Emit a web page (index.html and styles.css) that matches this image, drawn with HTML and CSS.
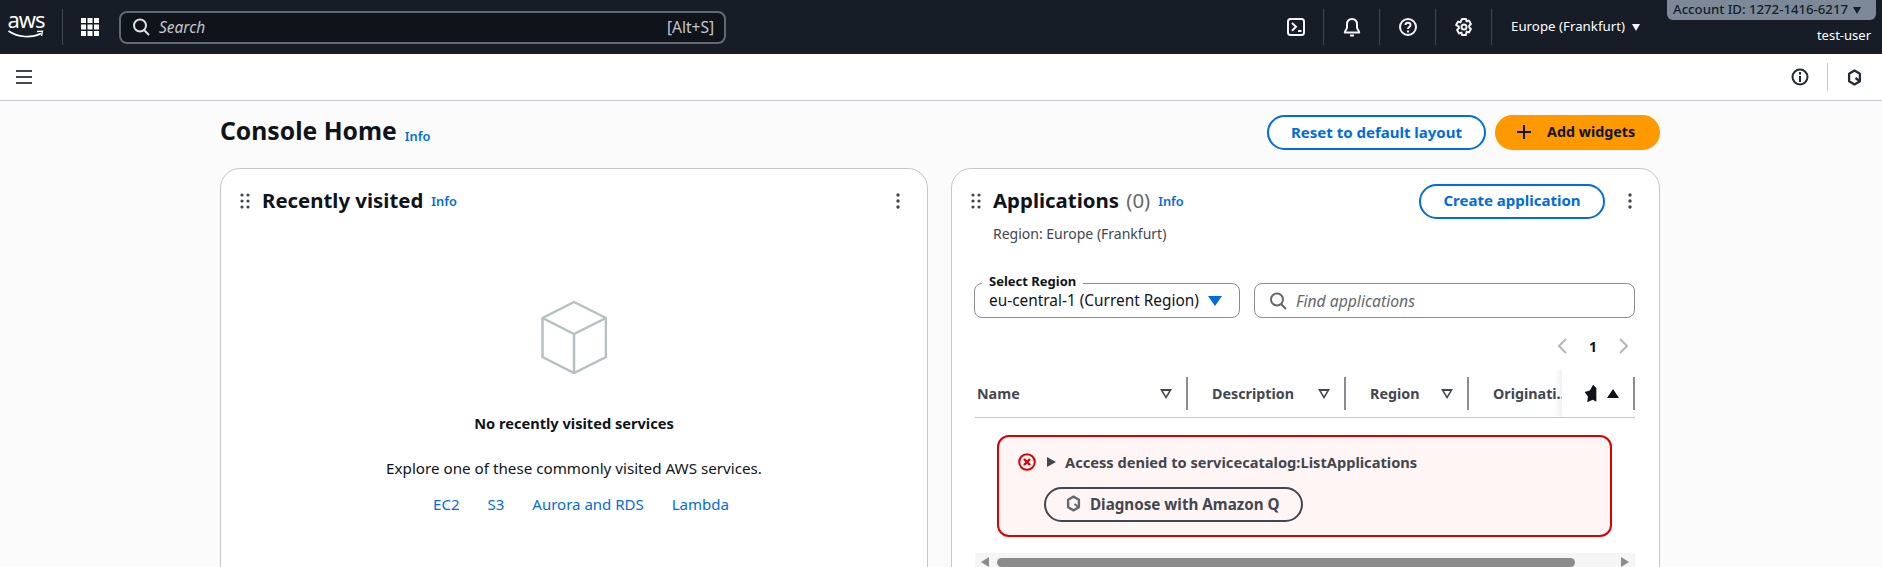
FILE: index.html
```html
<!DOCTYPE html>
<html lang="en">
<head>
    <meta charset="UTF-8">
    <title>Console Home</title>
    <link rel="stylesheet" href="styles.css">
</head>
<body>
    <header class="topbar">
        <div class="logo">
            <span class="logo-text">aws</span>
            <svg class="logo-smile" width="36" height="9" viewBox="0 0 36 9"><path d="M0.500 1C10 7.500 23 8.500 33 3.500" fill="none" stroke="#fff" stroke-width="1.600"/><path d="M29 1.500L34.500 1.200L33.500 6" fill="none" stroke="#fff" stroke-width="1.300"/></svg>
        </div>
        <span class="top-div logo-div"></span>
        <svg class="grid-icon" width="20" height="18" viewBox="0 0 20 18" fill="#fff"><rect x="1" y="0" width="5" height="5"/><rect x="7.500" y="0" width="5" height="5"/><rect x="14" y="0" width="5" height="5"/><rect x="1" y="6.500" width="5" height="5"/><rect x="7.500" y="6.500" width="5" height="5"/><rect x="14" y="6.500" width="5" height="5"/><rect x="1" y="13" width="5" height="5"/><rect x="7.500" y="13" width="5" height="5"/><rect x="14" y="13" width="5" height="5"/></svg>
        <div class="search">
            <svg width="18" height="18" viewBox="0 0 18 18" fill="none" stroke="#dedee3" stroke-width="2"><circle cx="8" cy="7.500" r="6"/><path d="M12 12l5 5"/></svg>
            <span class="search-text">Search</span>
            <span class="search-key">[Alt+S]</span>
        </div>
        <div class="top-icons">
            <span class="top-icon">
                <svg width="20" height="20" viewBox="0 0 20 20" fill="none" stroke="#f3f3f7" stroke-width="2"><rect x="2" y="2" width="16" height="16" rx="2.500"/><path d="M6 6l4 3.800-4 4M12 14h3.500"/></svg>
            </span>
            <span class="top-icon">
                <svg width="20" height="20" viewBox="0 0 20 20" fill="none" stroke="#f3f3f7" stroke-width="2"><path d="M10 2C6.500 2 5 4.500 5 7.500V10.500C5 12 3 13.500 2.800 15.500H17.200C17 13.500 15 12 15 10.500V7.500C15 4.500 13.500 2 10 2z" stroke-linejoin="round"/><path d="M8 18.500h4"/></svg>
            </span>
            <span class="top-icon">
                <svg width="20" height="20" viewBox="0 0 20 20" fill="none" stroke="#f3f3f7" stroke-width="2"><circle cx="10" cy="10" r="8"/><path d="M7.500 8c0-3 5-3 5 0 0 2-2.500 2-2.500 4"/><path d="M10 13.500v2"/></svg>
            </span>
            <span class="top-icon">
                <svg width="20" height="20" viewBox="0 0 20 20" fill="none" stroke="#f3f3f7" stroke-width="2"><circle cx="10" cy="10" r="2.500"/><path d="M8 2h4l.6 2.400 2.300-.8 2 3.400-1.700 1.700v1.600l1.700 1.700-2 3.400-2.300-.8L12 18H8l-.6-2.400-2.300.8-2-3.400 1.700-1.700V9.700L2.100 8l2-3.400 2.300.8z" stroke-linejoin="round"/></svg>
            </span>
        </div>
        <div class="region-menu">Europe (Frankfurt)<span class="caret-white"></span></div>
        <div class="account">
            <div class="account-badge">Account ID: 1272-1416-6217<span class="caret-dark"></span></div>
            <div class="account-user">test-user</div>
        </div>
    </header>

    <nav class="subnav">
        <svg width="18" height="14" viewBox="0 0 18 14" fill="none" stroke="#424650" stroke-width="2"><path d="M1 1h16M1 7h16M1 13h16"/></svg>
        <div class="subnav-right">
            <svg width="18" height="18" viewBox="0 0 18 18" fill="none" stroke="#232b37" stroke-width="2"><circle cx="9" cy="9" r="7.500"/><path d="M9 8v6M9 4v2.500"/></svg>
            <span class="subnav-div"></span>
            <svg class="q-icon" width="15" height="17" viewBox="0 0 14 17" fill="none" stroke="#232b37" stroke-width="2.300"><path d="M7 1.600l5.400 3.200v7.400L7 15.400 1.600 12.200V4.800z" stroke-linejoin="round"/><path d="M8 9l4 3" stroke-width="2.200"/></svg>
        </div>
    </nav>

    <main class="page">
        <div class="page-head">
            <h1>Console Home</h1>
            <a class="info info-h1">Info</a>
            <div class="page-actions">
                <button class="btn btn-reset">Reset to default layout</button>
                <button class="btn btn-add">
                    <svg width="14" height="14" viewBox="0 0 14 14" fill="none" stroke="#0f141a" stroke-width="2"><path d="M7 0v14M0 7h14"/></svg>
                    Add widgets
                </button>
            </div>
        </div>

        <div class="cards">
            <section class="card">
                <div class="card-head">
                    <svg class="drag" width="10" height="16" viewBox="0 0 10 16" fill="#424650"><circle cx="2" cy="2" r="1.600"/><circle cx="8" cy="2" r="1.600"/><circle cx="2" cy="8" r="1.600"/><circle cx="8" cy="8" r="1.600"/><circle cx="2" cy="14" r="1.600"/><circle cx="8" cy="14" r="1.600"/></svg>
                    <h2>Recently visited</h2>
                    <a class="info">Info</a>
                    <svg class="kebab" width="4" height="16" viewBox="0 0 4 16" fill="#424650"><circle cx="2" cy="2" r="1.700"/><circle cx="2" cy="8" r="1.700"/><circle cx="2" cy="14" r="1.700"/></svg>
                </div>
                <div class="empty">
                    <svg class="cube" width="66" height="74" viewBox="0 0 66 74" fill="none" stroke="#b4c0c2" stroke-width="2.500" stroke-linejoin="round"><path d="M33 2L65 18V57L33 73 1.500 57V18z"/><path d="M1.500 18L33 34 65 18M33 34V73"/></svg>
                    <div class="empty-title">No recently visited services</div>
                    <p class="empty-text">Explore one of these commonly visited AWS services.</p>
                    <div class="empty-links"><a>EC2</a><a>S3</a><a>Aurora and RDS</a><a>Lambda</a></div>
                </div>
            </section>

            <section class="card">
                <div class="card-head">
                    <svg class="drag" width="10" height="16" viewBox="0 0 10 16" fill="#424650"><circle cx="2" cy="2" r="1.600"/><circle cx="8" cy="2" r="1.600"/><circle cx="2" cy="8" r="1.600"/><circle cx="8" cy="8" r="1.600"/><circle cx="2" cy="14" r="1.600"/><circle cx="8" cy="14" r="1.600"/></svg>
                    <h2>Applications <span class="count">(0)</span></h2>
                    <a class="info">Info</a>
                    <button class="btn btn-create">Create application</button>
                    <svg class="kebab" width="4" height="16" viewBox="0 0 4 16" fill="#424650"><circle cx="2" cy="2" r="1.700"/><circle cx="2" cy="8" r="1.700"/><circle cx="2" cy="14" r="1.700"/></svg>
                </div>
                <div class="card-sub">Region: Europe (Frankfurt)</div>

                <div class="filters">
                    <div class="select">
                        <span class="select-label">Select Region</span>
                        <span class="select-value">eu-central-1 (Current Region)</span>
                        <span class="caret-blue"></span>
                    </div>
                    <div class="find">
                        <svg width="18" height="18" viewBox="0 0 18 18" fill="none" stroke="#656871" stroke-width="2"><circle cx="8" cy="7.500" r="6"/><path d="M12 12l5 5"/></svg>
                        <span>Find applications</span>
                    </div>
                </div>

                <div class="pager">
                    <svg width="10" height="16" viewBox="0 0 10 16" fill="none" stroke="#b4b4bb" stroke-width="2"><path d="M9 1L2 8l7 7"/></svg>
                    <span class="pager-num">1</span>
                    <svg width="10" height="16" viewBox="0 0 10 16" fill="none" stroke="#b4b4bb" stroke-width="2"><path d="M1 1l7 7-7 7"/></svg>
                </div>

                <div class="table-head">
                    <div class="col col-name">Name<span class="filter-tri"></span></div>
                    <div class="col col-desc">Description<span class="filter-tri"></span></div>
                    <div class="col col-region">Region<span class="filter-tri"></span></div>
                    <div class="col col-orig">Originati...</div>
                    <div class="col-sticky">
                        <svg width="13" height="19" viewBox="70 28 40 58" fill="#0f141a"><path d="M98 30L88 48 72 52 82 66 80 84 97 76 108 82V40z"/></svg>
                        <span class="sort-up"></span>
                    </div>
                </div>

                <div class="alert">
                    <div class="alert-row">
                        <svg width="18" height="18" viewBox="0 0 18 18" fill="none" stroke="#db0000" stroke-width="2"><circle cx="9" cy="9" r="7.800"/><path d="M6 6l6 6M12 6l-6 6" stroke-width="2.400"/></svg>
                        <span class="expand-tri"></span>
                        <span class="alert-text">Access denied to servicecatalog:ListApplications</span>
                    </div>
                    <button class="btn btn-diagnose">
                        <svg width="15" height="17" viewBox="0 0 14 17" fill="none" stroke="#656871" stroke-width="2.400"><path d="M7 1.600l5.400 3.200v7.400L7 15.400 1.600 12.200V4.800z" stroke-linejoin="round"/><path d="M8 9l4 3" stroke-width="2"/></svg>
                        Diagnose with Amazon Q
                    </button>
                </div>

                <div class="hscroll">
                    <span class="hscroll-left"></span>
                    <span class="hscroll-thumb"></span>
                    <span class="hscroll-right"></span>
                </div>
            </section>
        </div>
    </main>
</body>
</html>
```

FILE: styles.css
```css
* {
    box-sizing: border-box;
}
html, body {
    height: 567px;
    overflow: hidden;
}
body {
    margin: 0;
    background-color: #fbfbfb;
    color: #0f141a;
    font-family: "Noto Sans", "Open Sans", sans-serif;
    font-size: 14px;
}
a {
    color: #006ce0;
}
button {
    font-family: inherit;
}

/* top bar */
.topbar {
    height: 54px;
    background-color: #161d26;
    color: #fff;
    display: flex;
    align-items: center;
    padding-left: 8px;
}
.logo {
    width: 36px;
    height: 36px;
    display: flex;
    flex-direction: column;
    align-items: center;
    flex-shrink: 0;
}
.logo-text {
    font-size: 22px;
    line-height: 21px;
    height: 21px;
    letter-spacing: -1px;
}
.top-div {
    width: 1px;
    height: 36px;
    background-color: #424650;
}
.logo-div {
    margin-left: 18px;
}
.grid-icon {
    margin-left: 17px;
}
.search {
    width: 607px;
    height: 33px;
    margin-left: 19px;
    background-color: #0f141a;
    border: 2px solid #656871;
    border-radius: 8px;
    display: flex;
    align-items: center;
    padding: 0 10px 0 11px;
    color: #c6c6cd;
    font-size: 15.500px;
    flex-shrink: 0;
}
.search-text {
    font-style: italic;
    margin-left: 9px;
}
.search-key {
    margin-left: auto;
}
.top-icons {
    display: flex;
    margin-left: 542px;
}
.top-icon {
    width: 56px;
    height: 36px;
    display: flex;
    align-items: center;
    justify-content: center;
    border-right: 1px solid #424650;
}
.region-menu {
    margin-left: 19px;
    font-size: 13.300px;
    margin-top: -2px;
    white-space: nowrap;
    width: 156px;
}
.caret-white {
    display: inline-block;
    margin-left: 7px;
    border-left: 4.500px solid transparent;
    border-right: 4.500px solid transparent;
    border-top: 7px solid #f3f3f7;
}
.account {
    align-self: flex-start;
    width: 209px;
}
.account-badge {
    height: 20px;
    background-color: #7d8998;
    color: #161d26;
    border-radius: 0 0 6px 6px;
    font-size: 13.200px;
    line-height: 18px;
    font-weight: 500;
    padding-left: 6px;
    white-space: nowrap;
    overflow: hidden;
}
.caret-dark {
    display: inline-block;
    margin-left: 5px;
    border-left: 4.500px solid transparent;
    border-right: 4.500px solid transparent;
    border-top: 7px solid #161d26;
}
.account-user {
    text-align: right;
    padding-right: 5px;
    margin-top: 5px;
    font-size: 13px;
    line-height: 20px;
}

/* second bar */
.subnav {
    height: 47px;
    background-color: #fff;
    border-bottom: 1px solid #c6c6cd;
    display: flex;
    align-items: center;
    padding: 0 20px 0 15px;
}
.subnav-right {
    margin-left: auto;
    display: flex;
    align-items: center;
}
.subnav-div {
    width: 1px;
    height: 28px;
    background-color: #c6c6cd;
    margin: 0 19px 0 18px;
}

/* page */
.page {
    width: 1440px;
    margin-left: 220px;
}
.page-head {
    height: 67px;
    padding-top: 14px;
    display: flex;
    align-items: flex-start;
}
h1 {
    margin: -2px 0 0;
    font-size: 24.700px;
    line-height: 35px;
    font-weight: 700;
}
.info {
    font-size: 12.800px;
    font-weight: 600;
    margin-left: 8px;
}
.info-h1 {
    margin-top: 12px;
}
.page-actions {
    margin-left: auto;
    display: flex;
    gap: 9px;
}
.btn {
    height: 35px;
    border-radius: 18px;
    border: 2px solid #006ce0;
    background-color: #fff;
    color: #006ce0;
    font-size: 15px;
    font-weight: 700;
    padding: 0 0 2px;
}
.btn-reset {
    width: 219px;
}
.btn-add {
    width: 165px;
    background-color: #ff9900;
    border-color: #ff9900;
    color: #0f141a;
    font-size: 14.300px;
    display: flex;
    align-items: center;
    gap: 16px;
    padding-left: 20px;
}
.cards {
    display: grid;
    grid-template-columns: 708px 709px;
    gap: 23px;
}
.card {
    height: 460px;
    background-color: #fff;
    border: 1px solid #c6c6cd;
    border-radius: 20px;
}
.card-head {
    height: 50px;
    padding: 14px 27px 0 19px;
    display: flex;
    align-items: center;
}
.drag {
    margin-right: 12px;
}
h2 {
    margin: -2px 0 0;
    font-size: 20.400px;
    line-height: 35px;
    font-weight: 700;
}
.count {
    font-weight: 400;
    color: #656871;
    margin-left: 2px;
}
.kebab {
    margin-left: auto;
}
.btn-create {
    width: 186px;
    margin-left: auto;
    margin-right: 23px;
}
.btn-create + .kebab {
    margin-left: 0;
}

/* left card */
.empty {
    display: flex;
    flex-direction: column;
    align-items: center;
    padding-top: 81px;
}
.empty-title {
    margin-top: 39px;
    font-weight: 700;
    font-size: 14.600px;
    line-height: 20px;
}
.empty-text {
    margin: 25px 0 0;
    font-size: 15.200px;
    line-height: 20px;
}
.empty-links {
    display: flex;
    gap: 28px;
    margin: 16px 0 0 14px;
    font-size: 15px;
    line-height: 20px;
}

/* right card */
.card-sub {
    padding-left: 41px;
    margin-top: 5px;
    line-height: 20px;
    color: #424650;
}
.filters {
    display: flex;
    gap: 14px;
    margin: 39px 24px 0 22px;
}
.select {
    position: relative;
    width: 266px;
    height: 35px;
    border: 1px solid #8c8c94;
    border-radius: 8px;
    display: flex;
    align-items: center;
    padding: 0 17px 0 14px;
    justify-content: space-between;
}
.select-label {
    position: absolute;
    left: 7px;
    top: -10px;
    padding: 0 7px;
    background-color: #fff;
    font-size: 13px;
    font-weight: 700;
    line-height: 14px;
}
.select-value {
    white-space: nowrap;
    font-size: 15.400px;
}
.caret-blue {
    border-left: 7px solid transparent;
    border-right: 7px solid transparent;
    border-top: 10px solid #006ce0;
}
.find {
    flex: 1;
    height: 35px;
    border: 1px solid #8c8c94;
    border-radius: 8px;
    display: flex;
    align-items: center;
    padding: 0 14px;
    gap: 9px;
    color: #656871;
    font-style: italic;
    font-size: 15.700px;
}
.pager {
    height: 18px;
    margin: 19px 24px 0 0;
    display: flex;
    align-items: center;
    justify-content: flex-end;
    gap: 22px;
    padding-right: 6px;
}
.pager-num {
    font-weight: 700;
}
.table-head {
    height: 49px;
    margin: 14px 24px 0 23px;
    border-bottom: 1px solid #c6c6cd;
    display: flex;
    position: relative;
    overflow: hidden;
    font-weight: 700;
    font-size: 14.300px;
    color: #424650;
}
.col {
    display: flex;
    align-items: center;
    padding-left: 24px;
    height: 33px;
    margin-top: 8px;
    border-right: 2px solid #8c8c94;
    position: relative;
    flex-shrink: 0;
}
.col-name {
    width: 213px;
    padding-left: 2px;
}
.col-desc {
    width: 158px;
}
.col-region {
    width: 123px;
}
.col-orig {
    width: 140px;
    border-right: 0;
}
.filter-tri {
    position: absolute;
    right: 14px;
    top: 12px;
    width: 0;
    height: 0;
    border-left: 6px solid transparent;
    border-right: 6px solid transparent;
    border-top: 10px solid #424650;
}
.filter-tri::after {
    content: "";
    position: absolute;
    left: -3px;
    top: -8px;
    border-left: 3px solid transparent;
    border-right: 3px solid transparent;
    border-top: 5px solid #fff;
}
.col-sticky {
    position: absolute;
    right: 0;
    top: 0;
    bottom: 0;
    width: 73px;
    background-color: #fff;
    box-shadow: -4px 0 5px rgba(0, 0, 0, 0.06);
    display: flex;
    align-items: center;
    padding-left: 22px;
    gap: 10px;
}
.col-sticky::after {
    content: "";
    position: absolute;
    right: 0;
    top: 8px;
    height: 33px;
    width: 2px;
    background-color: #8c8c94;
}
.sort-up {
    border-left: 6px solid transparent;
    border-right: 6px solid transparent;
    border-bottom: 9px solid #0f141a;
}
.alert {
    width: 615px;
    height: 102px;
    margin: 17px 0 0 45px;
    background-color: #fff5f5;
    border: 2px solid #db0000;
    border-radius: 12px;
    padding: 15px 0 0 19px;
}
.alert-row {
    display: flex;
    align-items: center;
    height: 20px;
}
.expand-tri {
    margin-left: 11px;
    border-top: 5.500px solid transparent;
    border-bottom: 5.500px solid transparent;
    border-left: 9px solid #424650;
}
.alert-text {
    margin-left: 9px;
    font-weight: 700;
    font-size: 14.650px;
    color: #424650;
}
.btn-diagnose {
    display: flex;
    align-items: center;
    gap: 9px;
    width: 259px;
    margin: 15px 0 0 26px;
    padding-left: 20px;
    background-color: transparent;
    border-color: #424650;
    color: #424650;
    font-size: 15.200px;
}
.hscroll {
    height: 14px;
    margin: 16px 24px 0 23px;
    background-color: #f5f5f5;
    display: flex;
    align-items: flex-end;
    position: relative;
}
.hscroll-thumb {
    height: 9px;
    width: 578px;
    margin-left: 22px;
    background-color: #8b8b8b;
    border-radius: 5px;
}
.hscroll-left {
    position: absolute;
    left: 6px;
    bottom: 0;
    border-top: 5px solid transparent;
    border-bottom: 5px solid transparent;
    border-right: 8px solid #8b8b8b;
}
.hscroll-right {
    position: absolute;
    right: 6px;
    bottom: 0;
    border-top: 5px solid transparent;
    border-bottom: 5px solid transparent;
    border-left: 8px solid #8b8b8b;
}
```
